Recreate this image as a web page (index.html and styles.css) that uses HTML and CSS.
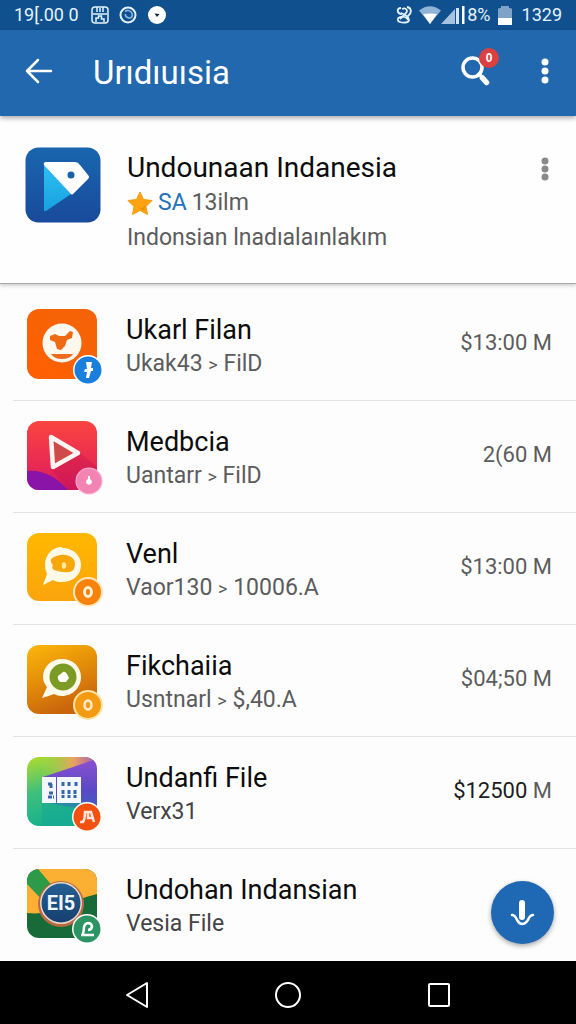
FILE: index.html
```html
<!DOCTYPE html>
<html lang="id">
<head>
  <meta charset="UTF-8">
  <meta name="viewport" content="width=device-width, initial-scale=1">
  <title>Undounaan Indanesia</title>
  <link rel="stylesheet" href="styles.css">
</head>
<body>

  <div class="status-bar">
    <div class="status-group">
      <span class="status-time">19[.00 0</span>
      <svg width="18" height="18" viewBox="0 0 18 18" fill="none" stroke="#e4f3fb" stroke-width="1.500">
        <rect x="1" y="1" width="16" height="16" rx="3"/>
        <path d="M6 1v5M9 2v4M12 1v5M2 8h14M5 16v-4h2.500v-2h3v3h2.500v3"/>
      </svg>
      <svg width="18" height="18" viewBox="0 0 18 18" fill="none" stroke="#e4f3fb">
        <circle cx="9" cy="9" r="7.500" stroke-width="2"/>
        <path d="M6 5.500c2-2 6-1 7 2s-1 5-3 4.500-4-2-3.500-4" stroke="#8fc0e6" stroke-width="1.500"/>
      </svg>
      <svg width="20" height="18" viewBox="0 0 20 18">
        <circle cx="10" cy="9" r="9" fill="#fff"/>
        <path d="M7.500 7.500l5 .5-2.500 3z" fill="#123"/>
      </svg>
    </div>
    <div class="status-group status-right">
      <svg width="16" height="18" viewBox="0 0 16 18" fill="none" stroke="#e4f3fb" stroke-width="1.800">
        <path d="M5 2C0 2 1 8 6 8M6 3c4-2 7 2 3 5l-5 5M11 1c5 1 5 6 1 9M5 7c4 1 8 4 8 7s-6 3-9 2-3-4 0-5 7 0 8 3"/>
      </svg>
      <svg width="22" height="18" viewBox="0 0 22 18">
        <path d="M0 4.500Q11-4 22 4.500L11 18z" fill="#8fb4d6"/>
        <path d="M4 8q7-1 14 0l-7 10z" fill="#fff"/>
      </svg>
      <svg class="signal" width="24" height="18" viewBox="0 0 24 18">
        <path d="M0 18L14 3v15z" fill="#a5c4e0"/>
        <path d="M15 18V2h3v16z" fill="#d4e4f2"/>
        <path d="M21 0h2.500v18H21z" fill="#fff"/>
      </svg>
      <span class="percent">8%</span>
      <svg width="14" height="19" viewBox="0 0 14 19">
        <path d="M0 3Q0 2 3 2V0h8v2q3 0 3 1v9H0z" fill="#7fa3c8"/>
        <path d="M0 12h14v7H0z" fill="#fff"/>
      </svg>
      <span class="status-clock">1329</span>
    </div>
  </div>

  <header class="app-bar">
    <button class="icon-btn" aria-label="Back">
      <svg width="28" height="26" viewBox="0 0 28 26" fill="none" stroke="#fff" stroke-width="2.500" stroke-linecap="round" stroke-linejoin="round">
        <path d="M26 13H2M13 2L2 13l11 11"/>
      </svg>
    </button>
    <h1>Urıdıuısia</h1>
    <button class="icon-btn search-btn" aria-label="Search">
      <svg width="30" height="30" viewBox="0 0 30 30" fill="none" stroke="#fff" stroke-linecap="round">
        <circle cx="11.500" cy="11.500" r="9.500" stroke-width="3.500"/>
        <path d="M18 18l3 3" stroke-width="3.500"/>
        <path d="M21.500 22l4 4.500" stroke-width="5.500"/>
      </svg>
      <span class="search-badge">0</span>
    </button>
    <button class="icon-btn more-btn" aria-label="More options">
      <svg width="8" height="26" viewBox="0 0 8 26" fill="#fff">
        <circle cx="4" cy="4" r="3.500"/><circle cx="4" cy="13" r="3.500"/><circle cx="4" cy="22" r="3.500"/>
      </svg>
    </button>
  </header>

  <section class="featured">
    <svg width="76" height="76" viewBox="0 0 76 76">
      <defs>
        <linearGradient id="blueTile" x1="0" y1="0" x2="0" y2="1">
          <stop offset="0" stop-color="#1966ae"/><stop offset="1" stop-color="#194a9c"/>
        </linearGradient>
        <linearGradient id="cyanFold" x1="0" y1="0" x2="0" y2="1">
          <stop offset="0" stop-color="#30c0f2"/><stop offset="1" stop-color="#16a2e0"/>
        </linearGradient>
      </defs>
      <rect x=".5" y=".5" width="75" height="75" rx="13" fill="url(#blueTile)"/>
      <path d="M19 17v46q0 2 2 1l25-17z" fill="url(#cyanFold)"/>
      <path d="M21 15h29q3 0 5 3l8 10q2 2 0 4L49 46q-2 3-4 0L19 18q-1-3 2-3z" fill="#fff"/>
      <circle cx="46" cy="28" r="3.500" fill="#1a5fa8"/>
    </svg>
    <div class="featured-text">
      <h2>Undounaan Indanesia</h2>
      <p class="rating">
        <svg width="26" height="24" viewBox="0 0 26 24">
          <path d="M13 1l3.500 7.500 8.500 1-6 6 1.500 8L13 19.500 5.500 23.500 7 15.500l-6-6 8.500-1z" fill="#fca311" stroke="#f79a0a" stroke-linejoin="round"/>
          <path d="M11 15l3 3 5-4-2 5-4-1z" fill="#ee8610"/>
        </svg>
        <span class="score">SA</span>
        <span>13ilm</span>
      </p>
      <p class="desc">Indonsian lnadıalaınlakım</p>
    </div>
    <button class="icon-btn card-more" aria-label="More options">
      <svg width="8" height="24" viewBox="0 0 8 24" fill="#8a8a8a">
        <circle cx="4" cy="4" r="3.500"/><circle cx="4" cy="12" r="3.500"/><circle cx="4" cy="20" r="3.500"/>
      </svg>
    </button>
  </section>

  <ul class="app-list">
    <li class="app-row">
      <svg width="78" height="78" viewBox="0 0 78 78">
        <defs>
          <linearGradient id="orangeTile" x1="1" y1="0" x2="0" y2="1">
            <stop offset="0" stop-color="#f3640a"/><stop offset="1" stop-color="#ff6000"/>
          </linearGradient>
        </defs>
        <rect width="70" height="70" rx="12" fill="url(#orangeTile)"/>
        <circle cx="35" cy="34" r="19.500" fill="#fff8ee"/>
        <path d="M23 27l5-2 4 2h6l5-5 3 1-1 6-5 2-2 6-4 4-4-1-2-7-5-2z" fill="#f06a14"/>
        <path d="M24 45h22q-3 5-11 5t-11-5z" fill="#ee6a1c"/>
        <circle cx="61" cy="61" r="15" fill="#fff"/>
        <circle cx="61" cy="61" r="13.500" fill="#1a7fdc"/>
        <path d="M59 53h6l-1 6h2v3h-2l-2 7h-3l1-6h-3l1-3h2z" fill="#fff"/>
      </svg>
      <div class="app-text">
        <h3>Ukarl Filan</h3>
        <p>Ukak43 <small>&gt;</small> FilD</p>
      </div>
      <span class="amount">$13:00 M</span>
    </li>
    <li class="app-row">
      <svg width="78" height="78" viewBox="0 0 78 78">
        <defs>
          <linearGradient id="redTile" x1="0" y1="0" x2="0" y2="1">
            <stop offset="0" stop-color="#fa4540"/><stop offset=".6" stop-color="#ea2b52"/><stop offset="1" stop-color="#d51a60"/>
          </linearGradient>
          <clipPath id="tileClip"><rect width="70" height="69" rx="12"/></clipPath>
        </defs>
        <g clip-path="url(#tileClip)">
          <rect width="70" height="69" fill="url(#redTile)"/>
          <path d="M24 48l29-16 17 14v23H41z" fill="#b91248" opacity=".3"/>
          <path d="M0 50q22-2 41 19H0z" fill="#8a14a8"/>
        </g>
        <path d="M24 16l27 16-25 14z" fill="#cf4a48" stroke="#fff5f2" stroke-width="4.500" stroke-linejoin="round"/>
        <circle cx="62" cy="60" r="13.500" fill="#fbb5d3"/>
        <circle cx="62" cy="60" r="12.500" fill="#f283b3"/>
        <path d="M61 55h2v3q2 1 2 3t-3 3q-3-1-3-3t2-3z" fill="#fff"/>
      </svg>
      <div class="app-text">
        <h3>Medbcia</h3>
        <p>Uantarr <small>&gt;</small> FilD</p>
      </div>
      <span class="amount">2(60 M</span>
    </li>
    <li class="app-row">
      <svg width="78" height="78" viewBox="0 0 78 78">
        <defs>
          <linearGradient id="yellowTile" x1="0" y1="0" x2="0" y2="1">
            <stop offset="0" stop-color="#ffb800"/><stop offset="1" stop-color="#fba40d"/>
          </linearGradient>
        </defs>
        <rect width="70" height="68" rx="12" fill="url(#yellowTile)"/>
        <path d="M35 15c11 0 19 7 19 17s-8 17-19 17q-6 0-9-2-4 2-10 5l4-11q-2-4-2-9c0-10 7-18 17-18z" fill="#fffae8"/>
        <path d="M24 26q7-5 15-4 9 2 9 9t-6 8-15-2q-3-2-1-5-3-3-2-6z" fill="#f8a70b"/>
        <path d="M35 30q3-2 4 1t-2 5q-3 0-2-6z" fill="#ffe9a0"/>
        <circle cx="61" cy="59" r="15" fill="#ffe7bd"/>
        <circle cx="61" cy="59" r="13" fill="#f7820c"/>
        <ellipse cx="61" cy="59" rx="3.500" ry="4.500" fill="none" stroke="#fff0d5" stroke-width="3"/>
      </svg>
      <div class="app-text">
        <h3>Venl</h3>
        <p>Vaor130 <small>&gt;</small> 10006.A</p>
      </div>
      <span class="amount">$13:00 M</span>
    </li>
    <li class="app-row">
      <svg width="78" height="78" viewBox="0 0 78 78">
        <defs>
          <linearGradient id="amberTile" x1="0" y1="0" x2=".4" y2="1">
            <stop offset="0" stop-color="#fbb80a"/><stop offset=".5" stop-color="#e58f09"/><stop offset="1" stop-color="#c9650c"/>
          </linearGradient>
        </defs>
        <rect width="70" height="69" rx="12" fill="url(#amberTile)"/>
        <path d="M35 14c11 0 19 8 19 18s-8 19-19 19q-5 0-8-2-5 2-12 4l5-11q-4-5-4-10c0-10 8-18 19-18z" fill="#fffbea"/>
        <circle cx="36" cy="32" r="13.500" fill="#7b9b25"/>
        <path d="M31 31l5-4q2-1 4 2l2 4-3 4h-6q-3-3-2-6z" fill="#fff"/>
        <circle cx="61" cy="60" r="15" fill="#ffe3a8"/>
        <circle cx="61" cy="60" r="13" fill="#f59a13"/>
        <ellipse cx="61" cy="60" rx="3.500" ry="4.500" fill="none" stroke="#ffeccb" stroke-width="2.500"/>
      </svg>
      <div class="app-text">
        <h3>Fikchaiia</h3>
        <p>Usntnarl <small>&gt;</small> $,40.A</p>
      </div>
      <span class="amount">$04;50 M</span>
    </li>
    <li class="app-row">
      <svg width="78" height="78" viewBox="0 0 78 78">
        <defs>
          <linearGradient id="greenTile" x1="0" y1="0" x2=".3" y2="1">
            <stop offset="0" stop-color="#b4dc2c"/><stop offset=".5" stop-color="#3fc07c"/><stop offset="1" stop-color="#14b08e"/>
          </linearGradient>
          <linearGradient id="topTile" x1="0" y1="0" x2="1" y2="0">
            <stop offset="0" stop-color="#9fdc30" stop-opacity="0"/><stop offset=".6" stop-color="#e9a45c"/><stop offset="1" stop-color="#a154c4"/>
          </linearGradient>
          <linearGradient id="violetTile" x1="0" y1="0" x2="0" y2="1">
            <stop offset="0" stop-color="#8a50d0"/><stop offset=".6" stop-color="#5b49c4"/><stop offset="1" stop-color="#3a66bd"/>
          </linearGradient>
        </defs>
        <g clip-path="url(#tileClip)">
          <rect width="70" height="69" fill="url(#greenTile)"/>
          <path d="M10 0h60v8L16 19z" fill="url(#topTile)"/>
          <path d="M70 2L16 20v25l54 10z" fill="url(#violetTile)"/>
          <path d="M15 44L54 45l16 6v18H15z" fill="#17a895" opacity=".6"/>
        </g>
        <path d="M15 20h14v26H15zM30 20h24v26H30z" fill="#f3f8ff"/>
        <path d="M21 27h5M24 27v4M22 36h4M21 40h6M36 25v5M42 25v5M49 25v5M36 33v8M42 33v8M48 33v8" stroke="#3767a8" stroke-width="3" stroke-dasharray="4 1"/>
        <circle cx="60" cy="60" r="15" fill="#fff"/>
        <circle cx="60" cy="60" r="13.500" fill="#f4500f"/>
        <path d="M53 65h3q2-3 2-10h6l3 10M61 56v5h4" fill="none" stroke="#ffe6dc" stroke-width="2.500"/>
      </svg>
      <div class="app-text">
        <h3>Undanfi File</h3>
        <p class="dark">Verx31</p>
      </div>
      <span class="amount"><b>$12500</b> M</span>
    </li>
    <li class="app-row">
      <svg width="78" height="78" viewBox="0 0 78 78">
        <defs>
          <linearGradient id="navyDisc" x1="0" y1="0" x2="0" y2="1">
            <stop offset="0" stop-color="#245f94"/><stop offset="1" stop-color="#163f6e"/>
          </linearGradient>
        </defs>
        <g clip-path="url(#tileClip)">
          <rect width="70" height="70" fill="#186a38"/>
          <path d="M8 0h62v25Q50 30 35 38T0 44V15z" fill="#fbb034"/>
          <path d="M0 15V0h11l17 20-12 12z" fill="#2c9a48"/>
        </g>
        <circle cx="34" cy="35" r="23" fill="#b86a42"/>
        <circle cx="34" cy="34" r="21" fill="#e9dccf"/>
        <circle cx="34" cy="34" r="19.500" fill="url(#navyDisc)"/>
        <text class="disc-text" x="34" y="41" text-anchor="middle">EI5</text>
        <circle cx="60" cy="60" r="15" fill="#fff"/>
        <circle cx="60" cy="60" r="13.500" fill="#2b9462"/>
        <path d="M54 66h13M56 65q1-4 1-7 1-4 5-4 3 1 3 4-1 3-4 3" fill="none" stroke="#fff" stroke-width="2.500"/>
      </svg>
      <div class="app-text">
        <h3>Undohan Indansian</h3>
        <p class="dark">Vesia File</p>
      </div>
    </li>
  </ul>

  <footer class="bottom">
    <button class="fab" aria-label="Download">
      <svg width="26" height="30" viewBox="0 0 26 30" fill="none" stroke="#fff" stroke-linecap="round">
        <path d="M12 5v14" stroke-width="6"/>
        <path d="M2 17q3 0 5 5 5 8 11 0 2-5 5-5" stroke-width="2.500"/>
      </svg>
    </button>
    <nav class="nav-bar">
      <button class="icon-btn" aria-label="Back">
        <svg width="26" height="28" viewBox="0 0 26 28" fill="none" stroke="#fff" stroke-width="2" stroke-linejoin="round"><path d="M23 2v24L3 14z"/></svg>
      </button>
      <button class="icon-btn" aria-label="Home">
        <svg width="28" height="28" viewBox="0 0 28 28" fill="none" stroke="#fff" stroke-width="2"><circle cx="14" cy="14" r="12"/></svg>
      </button>
      <button class="icon-btn" aria-label="Recent apps">
        <svg width="26" height="28" viewBox="0 0 26 28" fill="none" stroke="#fff" stroke-width="2"><rect x="3" y="3" width="20" height="22" rx="1"/></svg>
      </button>
    </nav>
  </footer>

</body>
</html>
```

FILE: styles.css
```css
* {
  box-sizing: border-box;
}

body {
  margin: 0;
  min-height: 100vh;
  display: flex;
  flex-direction: column;
  font-family: Roboto, 'Liberation Sans', sans-serif;
  background-color: #fdfdfe;
  color: #0c0c0c;
}

h1, h2, h3, p, ul {
  margin: 0;
  padding: 0;
  font-weight: 400;
}

svg {
  display: block;
  flex: none;
}

.status-bar {
  height: 30px;
  padding: 0 14px;
  display: flex;
  align-items: center;
  justify-content: space-between;
  background-color: #10508f;
  color: #e4f3fb;
  font-size: 18px;
  line-height: 28px;
}

.status-group {
  display: flex;
  align-items: center;
  gap: 10px;
}

.status-time {
  margin-right: 2px;
}

.status-right {
  gap: 7px;
}

.signal {
  margin-left: -7px;
}

.percent {
  margin-left: -5px;
}

.status-clock {
  margin-left: 3px;
}

.icon-btn {
  display: flex;
  align-items: center;
  justify-content: center;
  padding: 0;
  border: none;
  background: none;
  cursor: pointer;
}

.app-bar {
  height: 86px;
  padding: 0 27px 4px 25px;
  display: flex;
  align-items: center;
  background-color: #2268ae;
  color: #fff;
  box-shadow: 0 2px 5px rgba(0, 0, 0, 0.35);
  z-index: 1;
}

.app-bar h1 {
  flex: 1;
  margin-left: 40px;
  padding-top: 4px;
  font-size: 33px;
  line-height: 40px;
}

.search-btn {
  position: relative;
}

.search-badge {
  position: absolute;
  top: -8px;
  right: -8px;
  width: 20px;
  height: 20px;
  border-radius: 50%;
  background-color: #d9403f;
  color: #fff;
  font-size: 12px;
  font-weight: 700;
  line-height: 20px;
  text-align: center;
}

.more-btn {
  margin-left: 50px;
}

.featured {
  height: 168px;
  padding: 31px 27px 0 25px;
  display: flex;
  align-items: flex-start;
  background-color: #fefefe;
  border-bottom: 1px solid #a9a9a9;
  box-shadow: 0 1px 4px rgba(0, 0, 0, 0.25);
}

.featured-text {
  flex: 1;
  margin-left: 26px;
}

.featured h2 {
  font-size: 28px;
  line-height: 42px;
}

.rating {
  display: flex;
  align-items: center;
  gap: 5px;
  color: #5c5c5c;
  font-size: 23px;
  line-height: 28px;
}

.score {
  color: #2272b9;
}

.desc {
  color: #5c5c5c;
  font-size: 23px;
  line-height: 42px;
}

.card-more {
  margin-top: 10px;
}

.app-list {
  flex: 1;
  margin-top: 5px;
  list-style: none;
}

.app-row {
  height: 112px;
  margin-left: 13px;
  padding: 20px 24px 0 14px;
  display: flex;
  align-items: flex-start;
  border-bottom: 1px solid #e2e3e6;
}

.app-row:last-child {
  border-bottom: none;
}

.app-text {
  flex: 1;
  margin-left: 21px;
}

.app-text h3 {
  font-size: 27px;
  line-height: 42px;
}

.app-text p {
  color: #5c5c5c;
  font-size: 23px;
  line-height: 26px;
}

.app-text small {
  font-size: 18px;
}

.app-text .dark {
  color: #444;
}

.amount {
  margin-top: 20px;
  color: #5c5c5c;
  font-size: 22px;
  line-height: 28px;
}

.amount b {
  color: #1c1c1c;
  font-weight: 400;
}

.disc-text {
  font-size: 20px;
  font-weight: 700;
  fill: #eef5fb;
}

.bottom {
  position: relative;
}

.fab {
  position: absolute;
  right: 22px;
  bottom: 80px;
  width: 63px;
  height: 63px;
  display: flex;
  align-items: center;
  justify-content: center;
  padding: 0;
  border: none;
  border-radius: 50%;
  background-color: #1f69b4;
  box-shadow: 0 2px 5px rgba(0, 0, 0, 0.35);
  cursor: pointer;
}

.nav-bar {
  height: 63px;
  padding: 4px 124px 0;
  display: flex;
  align-items: center;
  justify-content: space-between;
  background-color: #000;
}
```
